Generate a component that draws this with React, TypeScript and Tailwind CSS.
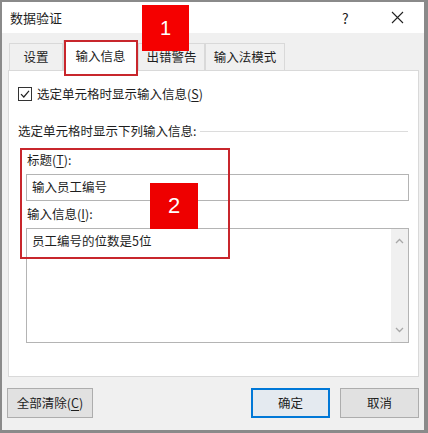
import React from 'react';

const Tab: React.FC<{ label: string; width: string; active?: boolean }> = ({ label, width, active }) => (
    <div
        className={`flex items-center justify-center border border-[#d9d9d9] ${width} ${
            active ? 'h-[31px] bg-white border-b-0 -mb-px z-10' : 'h-[27px] bg-[#f0f0f0] border-b-0'
        }`}
    >
        {label}
    </div>
);

const Hotkey: React.FC<{ text: string; k: string; suffix?: string }> = ({ text, k, suffix }) => (
    <span>
        {text}(<span className="underline underline-offset-2">{k}</span>){suffix}
    </span>
);

const DialogButton: React.FC<{ children: React.ReactNode; primary?: boolean; className?: string }> = ({ children, primary, className }) => (
    <button
        className={`h-[30px] flex items-center justify-center ${
            primary ? 'border-2 border-[#0078d7] bg-[#e4eaf0]' : 'border border-[#adadad] bg-[#e1e1e1]'
        } ${className ?? ''}`}
    >
        {children}
    </button>
);

export default function App() {
    return (
        <div className="relative w-[428px] h-[433px] overflow-hidden border-t-2 border-l-2 border-r-[4px] border-b-[3px] border-[#8a8a8a] bg-[#f0f0f0] text-[12.5px] text-[#1e1e1e] font-['Noto_Sans_CJK_SC','Microsoft_YaHei',sans-serif] leading-none">
            {/* Title bar */}
            <div className="h-[31px] bg-white flex items-center pl-[8px]">
                <span className="flex-1 text-[13px]">数据验证</span>
                <span className="w-[10px] text-[14px] mr-[39px]">?</span>
                <svg width="13" height="13" viewBox="0 0 13 13" className="mr-[20px]">
                    <path d="M1 1 L12 12 M12 1 L1 12" stroke="#222" strokeWidth="1.1" fill="none" />
                </svg>
            </div>

            {/* Tabs */}
            <div className="flex items-end pl-[7px] pt-[8px] h-[37px]">
                <Tab label="设置" width="w-[54px]" />
                <Tab label="输入信息" width="w-[75px]" active />
                <Tab label="出错警告" width="w-[67px]" />
                <Tab label="输入法模式" width="w-[80px]" />
            </div>

            {/* Panel */}
            <div className="ml-[6px] w-[411px] h-[307px] bg-white border border-[#d9d9d9] pl-[17px] pr-[9px] pt-[16px] flex flex-col">
                <div className="flex items-center h-[14px] -ml-[8px]">
                    <svg width="14" height="14" viewBox="0 0 14 14">
                        <rect x="0.5" y="0.5" width="13" height="13" fill="white" stroke="#333" />
                        <path d="M3 7.2 L5.8 10 L11 3.8" stroke="#222" strokeWidth="1.2" fill="none" />
                    </svg>
                    <span className="ml-[5px]">
                        <Hotkey text="选定单元格时显示输入信息" k="S" />
                    </span>
                </div>

                <div className="flex items-center mt-[23px] h-[14px] -ml-[8px]">
                    <span>选定单元格时显示下列输入信息:</span>
                    <div className="flex-1 h-px bg-[#dcdcdc] ml-[4px] mr-[1px]" />
                </div>

                <div className="mt-[16px] h-[14px] ml-[1px]">
                    <Hotkey text="标题" k="T" suffix=":" />
                </div>
                <div className="mt-[6px] h-[27px] border border-[#b4b4b4] flex items-center pl-[5px]">
                    输入员工编号
                </div>

                <div className="mt-[7px] h-[14px] ml-[1px]">
                    <Hotkey text="输入信息" k="I" suffix=":" />
                </div>
                <div className="mt-[6px] h-[115px] border border-[#b4b4b4] flex">
                    <div className="flex-1 pl-[5px] pt-[6px]">员工编号的位数是5位</div>
                    <div className="w-[17px] bg-[#f0f0f0] flex flex-col items-center justify-between py-[9px]">
                        <svg width="9" height="6" viewBox="0 0 9 6">
                            <path d="M1 5 L4.5 1.5 L8 5" stroke="#a8a8a8" strokeWidth="1.3" fill="none" />
                        </svg>
                        <svg width="9" height="6" viewBox="0 0 9 6">
                            <path d="M1 1 L4.5 4.5 L8 1" stroke="#a8a8a8" strokeWidth="1.3" fill="none" />
                        </svg>
                    </div>
                </div>
            </div>

            {/* Buttons */}
            <div className="flex items-center pl-[5px] pt-[11px]">
                <DialogButton className="w-[86px]">
                    <Hotkey text="全部清除" k="C" />
                </DialogButton>
                <div className="flex-1" />
                <DialogButton primary className="w-[79px] mr-[10px]">确定</DialogButton>
                <DialogButton className="w-[79px] mr-[5px]">取消</DialogButton>
            </div>

            {/* Annotations */}
            <div className="absolute left-[62px] top-[38px] w-[74px] h-[36px] border-2 border-[#c8262c] z-20" />
            <div className="absolute left-[140px] top-[3px] w-[47px] h-[46px] bg-[#f50000] flex items-center justify-center text-white text-[20px] font-['Liberation_Sans',sans-serif] z-20">
                1
            </div>
            <div className="absolute left-[18px] top-[146px] w-[210px] h-[111px] border-2 border-[#c8262c] z-20" />
            <div className="absolute left-[148px] top-[181px] w-[48px] h-[46px] bg-[#ee0000] flex items-center justify-center text-white text-[22px] font-['Liberation_Sans',sans-serif] z-20">
                2
            </div>
        </div>
    );
}
